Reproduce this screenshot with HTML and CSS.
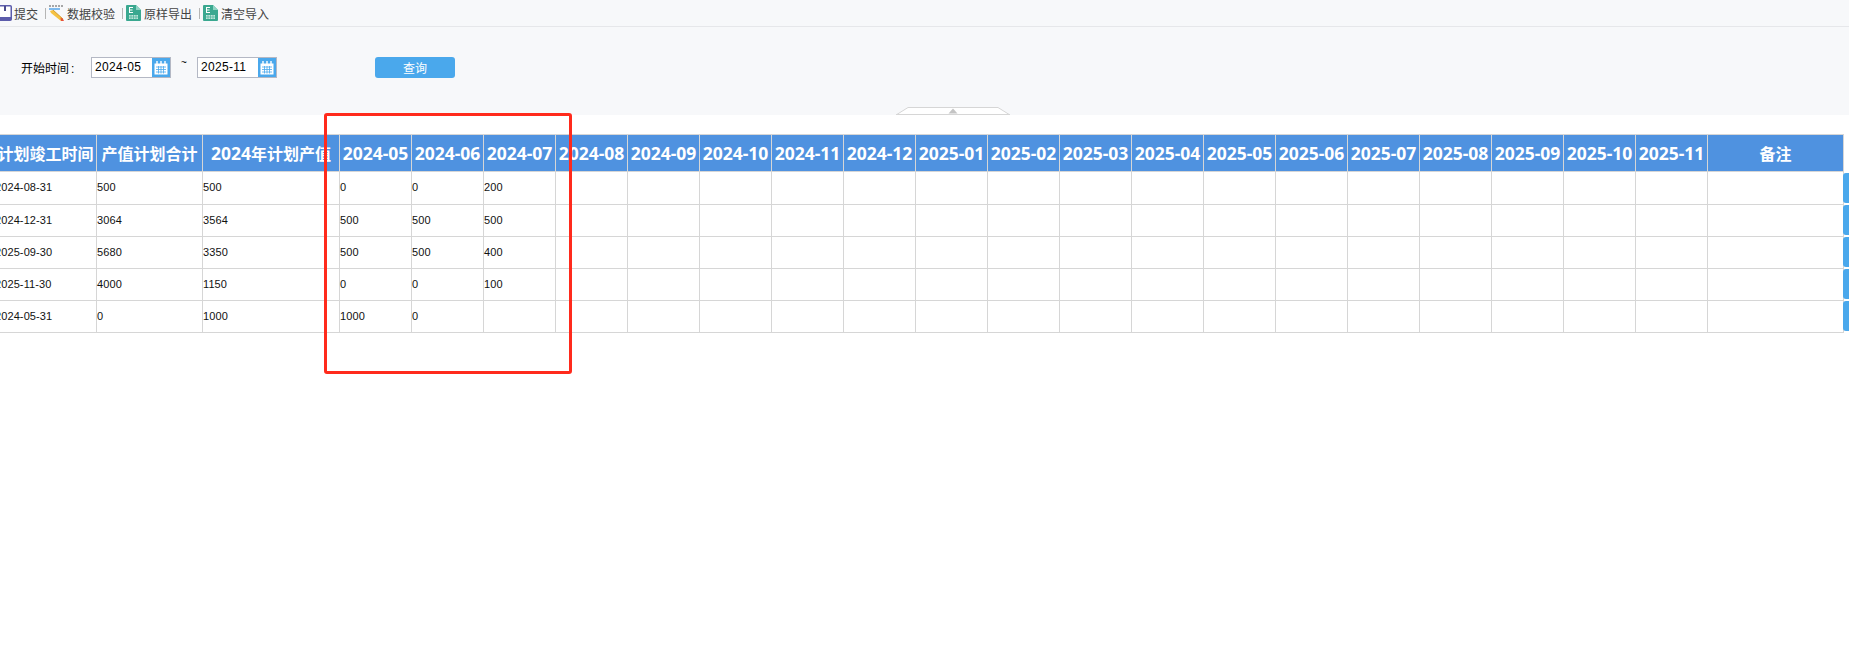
FILE: index.html
```html
<!DOCTYPE html>
<html lang="zh-CN">
<head>
<meta charset="utf-8">
<title>计划产值</title>
<link rel="stylesheet" href="styles.css">
</head>
<body>
<div class="page">
  <div class="toolbar">
    <div class="tool tool-first">
      <svg class="icon" viewBox="0 0 15 16"><rect x="0.75" y="0.75" width="13.5" height="14.5" rx="1" fill="#fff" stroke="#5c5cab" stroke-width="1.500"/><rect x="7" y="1" width="2" height="5" fill="#4a4a8c"/><rect x="1" y="12" width="13" height="3" fill="#5c5cab"/></svg>
      <span>提交</span>
    </div>
    <i class="sep"></i>
    <div class="tool">
      <svg class="icon" viewBox="0 0 15 16"><path d="M0 1h14" stroke="#555" stroke-width="1" stroke-dasharray="2 1"/><path d="M0 4h11" stroke="#4aa0e8" stroke-width="1.4"/><path d="M1 6l3-1 10 9-2 2-10-8z" fill="#f5c242"/><path d="M4 5l10 9" stroke="#c98d1c" stroke-width="0.8"/><path d="M11.5 12.5l2.5 1.5 1 2-3 0z" fill="#e8503a"/></svg>
      <span>数据校验</span>
    </div>
    <i class="sep"></i>
    <div class="tool">
      <svg class="icon" viewBox="0 0 15 16"><path d="M0 1a1 1 0 0 1 1-1h9l5 5v10a1 1 0 0 1-1 1H1a1 1 0 0 1-1-1z" fill="#3aa890"/><path d="M10 0l5 5h-5z" fill="#8fd4c4"/><path d="M3 2h4v1H4v1.500h2.500v1H4V7h3v1H3z" fill="#fff"/><path d="M3 10h9v4H3z" fill="#bfe5db"/><path d="M5 10v4M7.500 10v4M10 10v4M3 12h9" stroke="#3aa890" stroke-width="0.6"/></svg>
      <span>原样导出</span>
    </div>
    <i class="sep"></i>
    <div class="tool">
      <svg class="icon" viewBox="0 0 15 16"><path d="M0 1a1 1 0 0 1 1-1h9l5 5v10a1 1 0 0 1-1 1H1a1 1 0 0 1-1-1z" fill="#3aa890"/><path d="M10 0l5 5h-5z" fill="#8fd4c4"/><path d="M3 2h4v1H4v1.500h2.500v1H4V7h3v1H3z" fill="#fff"/><path d="M3 10h9v4H3z" fill="#bfe5db"/><path d="M5 10v4M7.500 10v4M10 10v4M3 12h9" stroke="#3aa890" stroke-width="0.6"/></svg>
      <span>清空导入</span>
    </div>
  </div>

  <div class="filter">
    <label class="filter-label">开始时间<span class="colon">:</span></label>
    <div class="date"><span class="date-value">2024-05</span><span class="date-btn"><svg class="cal" viewBox="0 0 16 16"><path d="M1.500 3.500h13v11h-13z" fill="#fff"/><path d="M4 1v4M8 1v4M12 1v4" stroke="#fff" stroke-width="1.400"/><path d="M3 7h10M3 9.500h10M3 12h10M5.500 6v7.500M8 6v7.500M10.500 6v7.500" stroke="#4aa8ec" stroke-width="0.800"/></svg></span></div>
    <span class="tilde">~</span>
    <div class="date"><span class="date-value">2025-11</span><span class="date-btn"><svg class="cal" viewBox="0 0 16 16"><path d="M1.500 3.500h13v11h-13z" fill="#fff"/><path d="M4 1v4M8 1v4M12 1v4" stroke="#fff" stroke-width="1.400"/><path d="M3 7h10M3 9.500h10M3 12h10M5.500 6v7.500M8 6v7.500M10.500 6v7.500" stroke="#4aa8ec" stroke-width="0.800"/></svg></span></div>
    <button class="query">查询</button>
  </div>

  <div class="collapse"><svg viewBox="0 0 114 8" width="114" height="8"><path d="M0 8L12 .5H102L114 8" fill="#fff" stroke="#d6d6d6"/><path d="M57 1.500l4.500 5h-9z" fill="#c4c4c4"/><path d="M0 7.500h114" stroke="#d6d6d6"/></svg></div>

  <div class="grid-wrap">
    <table class="grid">
      <colgroup>
        <col class="c-date"><col class="c-total"><col class="c-year">
        <col class="c-m"><col class="c-m"><col class="c-m"><col class="c-m"><col class="c-m"><col class="c-m"><col class="c-m"><col class="c-m"><col class="c-m"><col class="c-m"><col class="c-m"><col class="c-m"><col class="c-m"><col class="c-m"><col class="c-m"><col class="c-m"><col class="c-m"><col class="c-m"><col class="c-m">
        <col class="c-note">
      </colgroup>
      <thead>
        <tr>
          <th>计划竣工时间</th><th>产值计划合计</th><th><span class="num">2024</span>年计划产值</th>
          <th class="num">2024-05</th><th class="num">2024-06</th><th class="num">2024-07</th><th class="num">2024-08</th><th class="num">2024-09</th><th class="num">2024-10</th><th class="num">2024-11</th><th class="num">2024-12</th>
          <th class="num">2025-01</th><th class="num">2025-02</th><th class="num">2025-03</th><th class="num">2025-04</th><th class="num">2025-05</th><th class="num">2025-06</th><th class="num">2025-07</th><th class="num">2025-08</th><th class="num">2025-09</th><th class="num">2025-10</th><th class="num">2025-11</th>
          <th>备注</th>
        </tr>
      </thead>
      <tbody>
        <tr><td>2024-08-31</td><td>500</td><td>500</td><td>0</td><td>0</td><td>200</td><td></td><td></td><td></td><td></td><td></td><td></td><td></td><td></td><td></td><td></td><td></td><td></td><td></td><td></td><td></td><td></td><td></td></tr>
        <tr><td>2024-12-31</td><td>3064</td><td>3564</td><td>500</td><td>500</td><td>500</td><td></td><td></td><td></td><td></td><td></td><td></td><td></td><td></td><td></td><td></td><td></td><td></td><td></td><td></td><td></td><td></td><td></td></tr>
        <tr><td>2025-09-30</td><td>5680</td><td>3350</td><td>500</td><td>500</td><td>400</td><td></td><td></td><td></td><td></td><td></td><td></td><td></td><td></td><td></td><td></td><td></td><td></td><td></td><td></td><td></td><td></td><td></td></tr>
        <tr><td>2025-11-30</td><td>4000</td><td>1150</td><td>0</td><td>0</td><td>100</td><td></td><td></td><td></td><td></td><td></td><td></td><td></td><td></td><td></td><td></td><td></td><td></td><td></td><td></td><td></td><td></td><td></td></tr>
        <tr><td>2024-05-31</td><td>0</td><td>1000</td><td>1000</td><td>0</td><td></td><td></td><td></td><td></td><td></td><td></td><td></td><td></td><td></td><td></td><td></td><td></td><td></td><td></td><td></td><td></td><td></td><td></td></tr>
      </tbody>
    </table>
    <div class="row-actions">
      <span class="row-btn"></span><span class="row-btn"></span><span class="row-btn"></span><span class="row-btn"></span><span class="row-btn"></span>
    </div>
  </div>

  <div class="highlight"></div>
</div>
</body>
</html>
```
FILE: styles.css
```css
html, body {
  margin: 0;
  padding: 0;
  background: #fff;
  overflow: hidden;
}
.page {
  position: relative;
  width: 1849px;
  height: 657px;
  overflow: hidden;
  font-family: "Liberation Sans", "Noto Sans CJK SC", sans-serif;
}
.toolbar {
  display: flex;
  align-items: center;
  height: 26px;
  background: #f7f8fa;
  border-bottom: 1px solid #e6e7ea;
  font-size: 12px;
  color: #444;
}
.tool {
  display: flex;
  align-items: center;
  gap: 3px;
}
.tool-first {
  margin-left: -3px;
}
.tool-first span {
  margin-left: -1px;
}
.icon {
  width: 15px;
  height: 16px;
  flex: none;
}
.sep {
  width: 1px;
  height: 11px;
  margin: 0 3px 0 7px;
  background: #b5b5b5;
}
.filter {
  display: flex;
  align-items: center;
  height: 88px;
  padding: 0 0 7px 21px;
  box-sizing: border-box;
  background: #f7f8fa;
  font-size: 12px;
  color: #000;
}
.filter-label {
  width: 70px;
}
.colon {
  margin-left: 2px;
}
.date {
  display: flex;
  width: 80px;
  height: 21px;
  box-sizing: border-box;
  border: 1px solid #b4b8c4;
  background: #fff;
}
.date-value {
  flex: 1;
  padding-left: 3px;
  line-height: 19px;
  letter-spacing: 0.3px;
}
.date-btn {
  display: flex;
  align-items: center;
  justify-content: center;
  width: 18px;
  background: #4aa8ec;
}
.cal {
  width: 16px;
  height: 16px;
}
.tilde {
  width: 26px;
  text-align: center;
  margin-top: -10px;
  font-size: 10px;
}
.query {
  width: 80px;
  height: 21px;
  margin-left: 98px;
  padding: 0;
  border: 0;
  border-radius: 3px;
  background: #4aa8ec;
  color: #fff;
  font: 12px "Noto Sans CJK SC", sans-serif;
}
.collapse {
  position: absolute;
  left: 896px;
  top: 107px;
  height: 8px;
  line-height: 0;
}
.grid-wrap {
  display: flex;
  align-items: flex-start;
  margin: 19px 0 0 -6px;
}
.grid {
  flex: none;
  width: 1849px;
  table-layout: fixed;
  border-collapse: collapse;
}
.c-date { width: 102px; }
.c-total { width: 106px; }
.c-year { width: 137px; }
.c-m { width: 72px; }
.c-note { width: 136px; }
.grid th {
  height: 37px;
  padding: 0;
  box-sizing: border-box;
  border: 1px solid #d6d6d6;
  background: #4f92e0;
  color: #fff;
  font: bold 16px "Noto Sans", "Noto Sans CJK SC", sans-serif;
  white-space: nowrap;
  overflow: hidden;
}
.grid th.num,
.grid th .num {
  font-size: 17.5px;
}
.grid td {
  height: 32px;
  padding: 0 0 2px;
  box-sizing: border-box;
  border: 1px solid #d6d6d6;
  background: #fff;
  color: #111;
  font: 11px "Liberation Sans", sans-serif;
  letter-spacing: 0.1px;
  white-space: nowrap;
}
.grid tbody tr:first-child td {
  height: 33px;
}
.row-actions {
  display: flex;
  flex-direction: column;
  flex: none;
  gap: 2px;
  margin: 39px 0 0 -1px;
}
.row-btn {
  display: block;
  width: 8px;
  height: 30px;
  border-radius: 3px 0 0 3px;
  background: #4aa8ec;
}
.highlight {
  position: absolute;
  left: 324px;
  top: 113px;
  width: 248px;
  height: 261px;
  box-sizing: border-box;
  border: 3px solid #ff2a1c;
  border-radius: 3px;
}
```
